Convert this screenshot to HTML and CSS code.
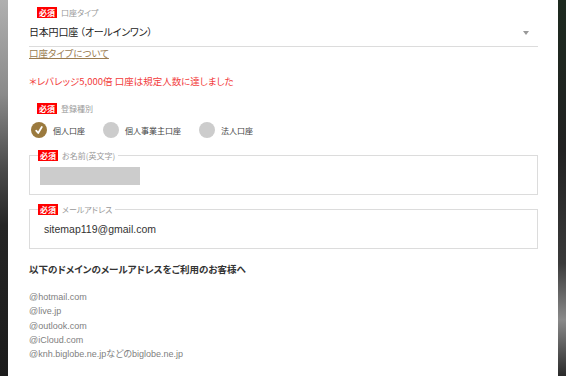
FILE: index.html
```html
<!DOCTYPE html>
<html lang="ja">
<head>
<meta charset="utf-8">
<link rel="stylesheet" href="styles.css">
</head>
<body>
<div class="page">
  <div class="side side-left"></div>
  <main class="panel">
    <div class="field-label"><span class="badge">必須</span><span class="label-text">口座タイプ</span></div>
    <div class="select">
      <span class="select-value">日本円口座<span class="paren">（オールインワン）</span></span>
      <span class="caret"></span>
    </div>
    <a class="link" href="#">口座タイプについて</a>
    <p class="notice">＊レバレッジ5,000倍 口座は規定人数に達しました</p>

    <div class="field-label reg"><span class="badge">必須</span><span class="label-text">登録種別</span></div>
    <div class="radios">
      <label class="radio"><span class="dot checked"><svg viewBox="0 0 16 16" width="16" height="16"><path d="M5.2 8.6 L7.2 11 L10.8 5" fill="none" stroke="#fff" stroke-width="1.8" stroke-linecap="round" stroke-linejoin="round"/></svg></span><span class="radio-text">個人口座</span></label>
      <label class="radio"><span class="dot"></span><span class="radio-text">個人事業主口座</span></label>
      <label class="radio"><span class="dot"></span><span class="radio-text">法人口座</span></label>
    </div>

    <fieldset class="box box-name">
      <legend><span class="badge">必須</span><span class="label-text">お名前(英文字)</span></legend>
      <div class="masked"></div>
    </fieldset>

    <fieldset class="box box-mail">
      <legend><span class="badge">必須</span><span class="label-text">メールアドレス</span></legend>
      <div class="mail">sitemap119@gmail.com</div>
    </fieldset>

    <h3 class="note-title">以下のドメインのメールアドレスをご利用のお客様へ</h3>
    <ul class="domains">
      <li>@hotmail.com</li>
      <li>@live.jp</li>
      <li>@outlook.com</li>
      <li>@iCloud.com</li>
      <li>@knh.biglobe.ne.jpなどのbiglobe.ne.jp</li>
    </ul>
  </main>
  <div class="side side-right"></div>
</div>
</body>
</html>
```
FILE: styles.css
```css
* { box-sizing: border-box; }
html, body { margin: 0; padding: 0; }
body {
  width: 566px;
  height: 376px;
  overflow: hidden;
  font-family: "Liberation Sans", "Noto Sans CJK JP", sans-serif;
  background: #1e1e1e;
}
.page {
  display: flex;
  height: 376px;
}
.side { width: 8px; flex: none; }
.side-left {
  background: linear-gradient(to bottom, #b0b0b0 0%, #8a8a8a 25%, #4a4a4a 45%, #262626 60%, #1c1c1c 100%);
}
.side-right {
  background: linear-gradient(to bottom, #1d2a1f 0%, #222 40%, #3a3a3a 70%, #8a8a8a 85%, #2a2a2a 100%);
}
.panel {
  flex: 1;
  background: #fff;
  padding: 7px 20px 0 21px;
  color: #333;
}
.field-label {
  display: flex;
  align-items: center;
  padding-left: 8px;
  height: 11px;
}
.badge {
  display: inline-block;
  background: #f00;
  color: #fff;
  font-size: 8px;
  line-height: 11px;
  height: 11px;
  padding: 0 2px;
  font-weight: bold;
  font-family: "Noto Sans CJK JP", sans-serif;
}
.label-text {
  color: #999;
  font-size: 8px;
  margin-left: 4px;
  font-family: "Noto Sans CJK JP", sans-serif;
  font-feature-settings: "palt";
}
.select {
  margin-top: 6px;
  height: 23px;
  border-bottom: 1.5px solid #dcdcdc;
  display: flex;
  align-items: flex-start;
  justify-content: space-between;
}
.select-value {
  font-size: 10px;
  line-height: 16px;
  color: #222;
  font-family: "Noto Sans CJK JP", sans-serif;
  font-feature-settings: "palt";
  letter-spacing: -0.2px;
}
.paren { margin-left: 2px; }
.caret {
  width: 0; height: 0;
  border-left: 3.5px solid transparent;
  border-right: 3.5px solid transparent;
  border-top: 4px solid #999;
  margin: 7px 9px 0 0;
}
.link {
  display: block;
  width: max-content;
  font-size: 9.5px;
  line-height: 13px;
  color: #9a7b4f;
  text-decoration: underline;
  font-family: "Noto Sans CJK JP", sans-serif;
  font-feature-settings: "palt";
}
.notice {
  margin: 14px 0 0;
  font-size: 9.5px;
  line-height: 14px;
  color: #f23c3c;
  font-family: "Noto Sans CJK JP", sans-serif;
  font-feature-settings: "palt";
}
.reg { margin-top: 15px; }
.radios {
  display: flex;
  margin-top: 8px;
  padding-left: 2px;
}
.radio {
  display: flex;
  align-items: center;
}
.dot {
  width: 16px; height: 16px;
  border-radius: 50%;
  background: #cccccc;
  display: inline-flex;
  flex: none;
}
.dot.checked { background: #9b7a3e; }
.radio-text {
  font-size: 8px;
  color: #444;
  margin-left: 6px;
  font-family: "Noto Sans CJK JP", sans-serif;
  font-feature-settings: "palt";
}
.radio:nth-child(1) { width: 72px; }
.radio:nth-child(2) { width: 96px; }
.box {
  margin: 0;
  border: 1px solid #dcdcdc;
  padding: 0 0 0 10px;
  min-width: 0;
}
.box legend {
  padding: 0 3px 0 0;
  margin-left: -2px;
  display: flex;
  align-items: center;
  height: 11px;
}
.box-name {
  margin-top: 12px;
  height: 45px;
}
.masked {
  width: 100px;
  height: 18px;
  background: #cccccc;
  margin-top: 6px;
}
.box-mail {
  margin-top: 9px;
  height: 45px;
}
.mail {
  font-size: 10.5px;
  line-height: 16px;
  color: #333;
  margin-top: 6px;
  padding-left: 4px;
}
.note-title {
  margin: 13px 0 0;
  font-size: 9.5px;
  line-height: 14px;
  font-weight: bold;
  color: #333;
  font-family: "Noto Sans CJK JP", sans-serif;
  font-feature-settings: "palt";
}
.domains {
  list-style: none;
  margin: 14px 0 0;
  padding: 0;
  font-size: 9px;
  line-height: 14.3px;
  color: #808080;
}
.domains li {
  font-feature-settings: "palt";
}
```
